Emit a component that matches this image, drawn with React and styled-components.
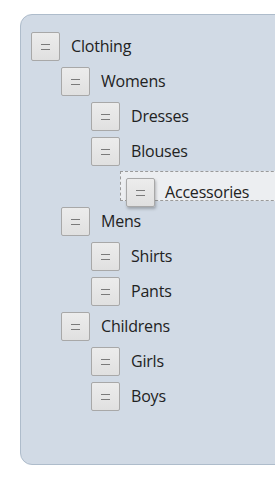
import React from "react";
import styled, { createGlobalStyle } from "styled-components";

const Global = createGlobalStyle`
  html, body { margin: 0; padding: 0; background: #fff; overflow: hidden; }
  body { font-family: "Open Sans", "Liberation Sans", sans-serif; }
`;

const Page = styled.div`
  padding: 14px 0 0 20px;
  width: 275px;
  height: 482px;
  box-sizing: border-box;
  overflow: hidden;
`;

const Panel = styled.div`
  position: relative;
  width: 300px;
  height: 451px;
  box-sizing: border-box;
  background: #d1dae5;
  border: 1px solid #aebccb;
  border-radius: 12px;
  padding: 16px 0 0 10px;
`;

const List = styled.ul`
  list-style: none;
  margin: 0;
  padding: 0 0 0 ${(p) => (p.$nested ? 30 : 0)}px;
`;

const Item = styled.li`
  margin: 0;
  padding: 0;
`;

const Row = styled.div`
  display: flex;
  align-items: center;
  height: 30px;
  margin-bottom: 5px;
`;

const Handle = styled.div`
  width: 29px;
  height: 29px;
  box-sizing: border-box;
  flex: none;
  display: flex;
  align-items: center;
  justify-content: center;
  border: 1px solid #a8a8a8;
  border-radius: 2px;
  background: linear-gradient(#ececec, #e0e0e0);
  box-shadow: ${(p) => (p.$dragging ? "1px 2px 3px rgba(0,0,0,0.25)" : "none")};
`;

const Equals = styled.span`
  width: 9px;
  height: 4px;
  border-top: 1px solid #7a7a7a;
  border-bottom: 1px solid #7a7a7a;
  margin-top: 2px;
`;

const Label = styled.span`
  margin-left: 11px;
  font-size: 16px;
  color: #222;
  white-space: nowrap;
  letter-spacing: -0.2px;
`;

const Placeholder = styled.div`
  height: 30px;
  box-sizing: border-box;
  margin: 0 0 5px -1px;
  border: 1px dashed #9a9a9a;
  background: #eceef1;
`;

const Dragged = styled.div`
  position: absolute;
  left: 105px;
  top: 162px;
  display: flex;
  align-items: center;
  height: 30px;
`;

const DragLabel = styled(Label)`
  margin-left: 10px;
`;

const tree = [
  {
    label: "Clothing",
    children: [
      {
        label: "Womens",
        children: [
          { label: "Dresses" },
          { label: "Blouses", placeholder: true },
        ],
      },
      {
        label: "Mens",
        children: [{ label: "Shirts" }, { label: "Pants" }],
      },
      {
        label: "Childrens",
        children: [{ label: "Girls" }, { label: "Boys" }],
      },
    ],
  },
];

function Node({ node }) {
  return (
    <Item>
      <Row>
        <Handle>
          <Equals />
        </Handle>
        <Label>{node.label}</Label>
      </Row>
      {node.children && (
        <List $nested>
          {node.children.map((c) => (
            <Node key={c.label} node={c} />
          ))}
        </List>
      )}
      {node.placeholder && (
        <List $nested>
          <Item>
            <Placeholder />
          </Item>
        </List>
      )}
    </Item>
  );
}

export default function App() {
  return (
    <>
      <Global />
      <Page>
        <Panel>
          <List>
            {tree.map((n) => (
              <Node key={n.label} node={n} />
            ))}
          </List>
          <Dragged>
            <Handle $dragging>
              <Equals />
            </Handle>
            <DragLabel>Accessories</DragLabel>
          </Dragged>
        </Panel>
      </Page>
    </>
  );
}
